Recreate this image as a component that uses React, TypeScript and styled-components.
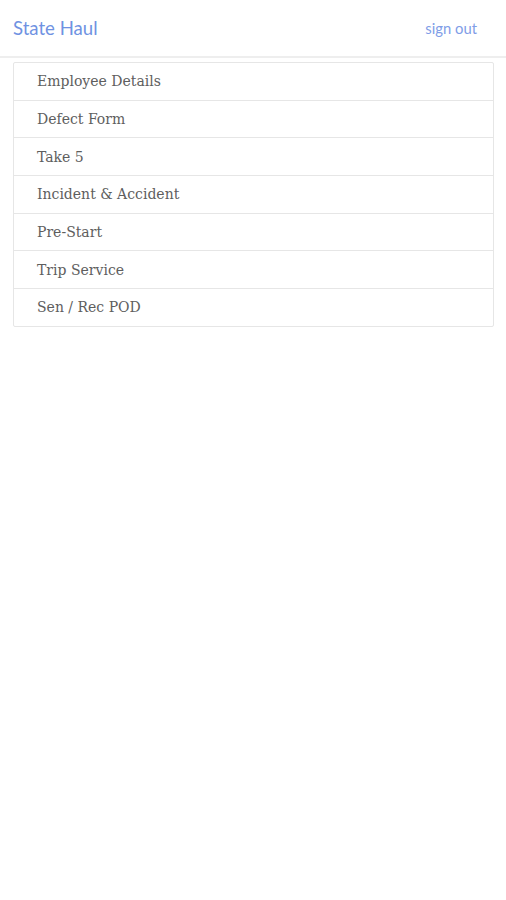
import React from 'react';
import styled, { createGlobalStyle } from 'styled-components';

const items = [
  'Employee Details',
  'Defect Form',
  'Take 5',
  'Incident & Accident',
  'Pre-Start',
  'Trip Service',
  'Sen / Rec POD'
];

const GlobalStyle = createGlobalStyle`
  html, body {
    margin: 0;
    padding: 0;
    background: #ffffff;
  }
`;

const App = () => {
  return (
    <Page>
      <GlobalStyle />
      <Header>
        <Brand>State Haul</Brand>
        <SignOut href="#">sign out</SignOut>
      </Header>
      <List>
        {items.map((label) => (
          <Item key={label}>{label}</Item>
        ))}
      </List>
    </Page>
  );
};

export default App;

const Page = styled.div`
  width: 506px;
  min-height: 900px;
  background: #ffffff;
`;

const Header = styled.div`
  height: 58px;
  display: flex;
  align-items: center;
  justify-content: space-between;
  padding: 0 29px 0 13px;
  border-bottom: 2px solid #eeeeee;
  box-sizing: border-box;
`;

const Brand = styled.div`
  font-family: Lato, 'Open Sans', sans-serif;
  font-size: 18.6px;
  font-weight: 400;
  color: #6f92e2;
  margin-top: -1px;
`;

const SignOut = styled.a`
  font-family: Lato, 'Open Sans', sans-serif;
  font-size: 14.8px;
  color: #809de7;
  text-decoration: none;
`;

const List = styled.div`
  display: flex;
  flex-direction: column;
  margin: 4px 12px 0 13px;
`;

const Item = styled.div`
  height: 38.7px;
  box-sizing: border-box;
  display: flex;
  align-items: center;
  padding: 0 23px;
  margin-bottom: -1px;
  border: 1px solid #e6e6e6;
  font-family: 'DejaVu Serif', serif;
  font-size: 14px;
  color: #5e5e5e;

  &:first-child {
    border-radius: 2px 2px 0 0;
  }
  &:last-child {
    border-radius: 0 0 2px 2px;
  }
`;
